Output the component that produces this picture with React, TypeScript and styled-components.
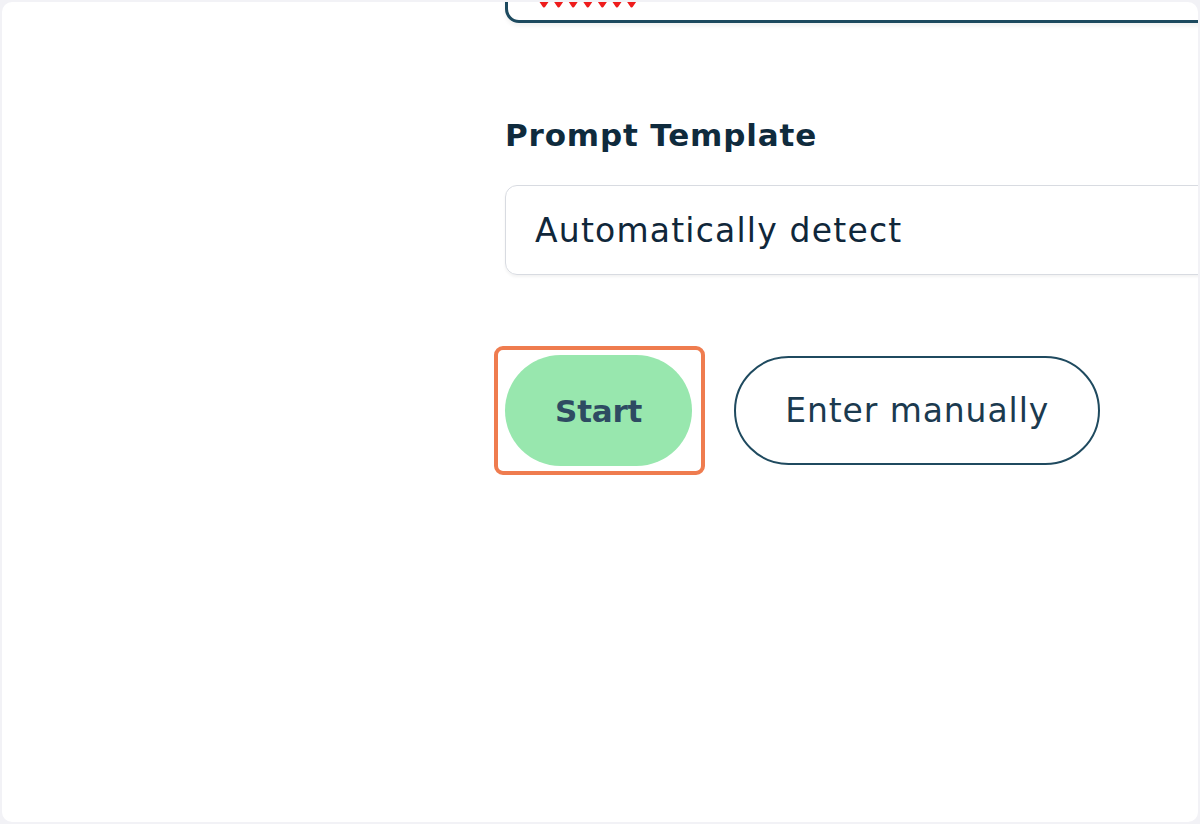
import styled, { createGlobalStyle } from 'styled-components';

const GlobalStyle = createGlobalStyle`
    html, body {
        margin:0;
        padding:0;
        background-color:#f2f2f6;
    }
    * {
        box-sizing:border-box;
    }
`;

const Frame = styled.div`
    width:1200px;
    height:824px;
    padding:2px;
`;
const Card = styled.div`
    width:100%;
    height:100%;
    background-color:white;
    border-radius:10px;
    overflow:hidden;
    font-family:"DejaVu Sans", Verdana, sans-serif;
    color:#102a3d;
`;
const Column = styled.div`
    display:flex;
    flex-direction:column;
    width:1000px;
    margin-left:503px;
    margin-top:-68px;
`;
const TextField = styled.div`
    position:relative;
    height:89px;
    border:3px solid #1d4a5f;
    border-radius:14px;
    box-shadow:0px 3px 4px 0px rgba(0,0,0,0.06);
`;
const Squiggle = styled.svg`
    position:absolute;
    left:29px;
    bottom:11px;
`;
const Label = styled.div`
    margin-top:94px;
    font-size:31px;
    font-weight:700;
    line-height:36px;
    letter-spacing:0.85px;
    color:#0f2b3d;
`;
const Select = styled.div`
    display:flex;
    align-items:center;
    height:90px;
    margin-top:32px;
    padding-left:29px;
    border:1.5px solid #d8dbe1;
    border-radius:12px;
    box-shadow:0px 2px 3px 0px rgba(0,0,0,0.05);
    font-size:33px;
    letter-spacing:1.2px;
    color:#10273a;
`;
const Actions = styled.div`
    display:flex;
    align-items:center;
    gap:42px;
    margin-top:80px;
`;
const Spotlight = styled.div`
    position:relative;
    display:flex;
    &::after {
        content:"";
        position:absolute;
        top:-9px;
        left:-11px;
        right:-13px;
        bottom:-9px;
        border:4.5px solid #ef7c4f;
        border-radius:9px;
    }
`;
const Button = styled.button<{ $primary?: boolean }>`
    height:${p => p.$primary ? '111px' : '109px'};
    padding:${p => p.$primary ? '0 50px' : '0 49px'};
    border-radius:56px;
    border:${p => p.$primary ? 'none' : '2px solid #1f4a5f'};
    background-color:${p => p.$primary ? '#98e7ae' : 'white'};
    color:${p => p.$primary ? '#2e4b62' : '#1b3a4f'};
    font-family:inherit;
    font-size:${p => p.$primary ? '31px' : '33px'};
    font-weight:${p => p.$primary ? 700 : 400};
    letter-spacing:${p => p.$primary ? '-0.2px' : '0.9px'};
`;

// spellcheck marks under the (scrolled away) field value
const bumps = [0, 1, 2, 3, 4, 5, 6];

export default function App() {
    return (
        <>
            <GlobalStyle />
            <Frame>
                <Card>
                    <Column>
                        <TextField>
                            <Squiggle width="108" height="12" viewBox="0 0 108 12">
                                {bumps.map(i => (
                                    <path
                                        key={i}
                                        d={`M${i * 14.6 + 2} 1.5 L${i * 14.6 + 12} 1.5 L${i * 14.6 + 7} 9 Z`}
                                        fill="#ee1c1c"
                                        stroke="#ee1c1c"
                                        strokeWidth="3"
                                        strokeLinejoin="round"
                                    />
                                ))}
                            </Squiggle>
                        </TextField>
                        <Label>Prompt Template</Label>
                        <Select>Automatically detect</Select>
                        <Actions>
                            <Spotlight>
                                <Button $primary>Start</Button>
                            </Spotlight>
                            <Button>Enter manually</Button>
                        </Actions>
                    </Column>
                </Card>
            </Frame>
        </>
    );
}
